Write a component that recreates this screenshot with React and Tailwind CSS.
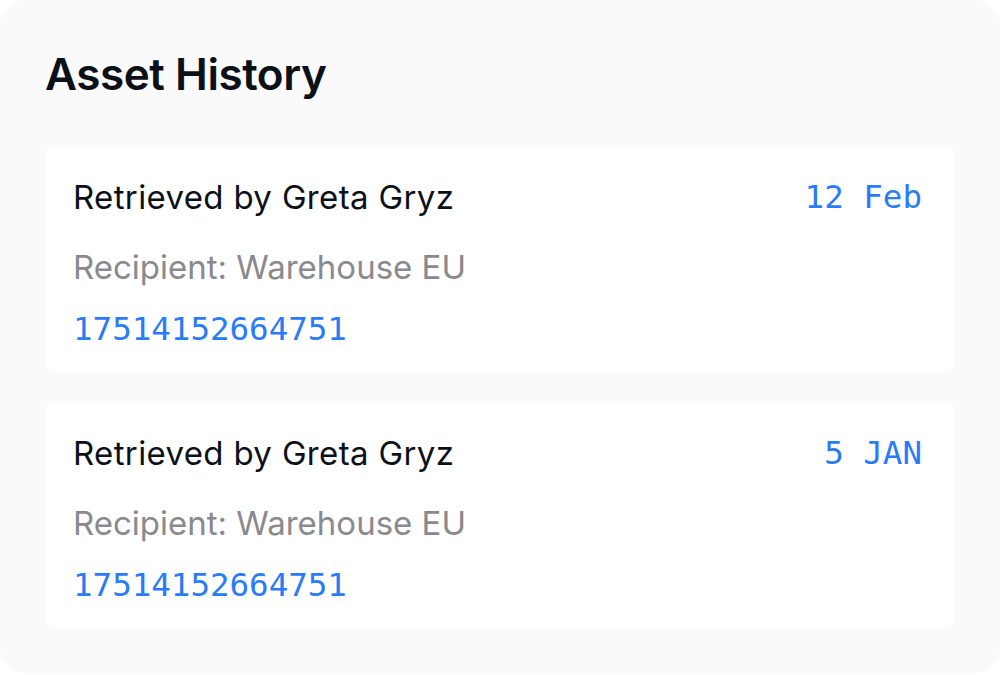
import React from 'react';

const history = [
  { id: 1, title: 'Retrieved by Greta Gryz', recipient: 'Warehouse EU', code: '17514152664751', date: '12 Feb' },
  { id: 2, title: 'Retrieved by Greta Gryz', recipient: 'Warehouse EU', code: '17514152664751', date: '5 JAN' },
];

const App = () => {
  return (
    <div className="w-[1000px] h-[675px] bg-white" style={{ fontFamily: 'Inter, "Noto Sans", sans-serif' }}>
      <div className="h-[673px] bg-[#fafafa] rounded-[24px] px-[45px] pt-[48px]">
        <h1 className="text-[44px] leading-[52px] font-semibold text-[#0b1117] tracking-[-0.01em]">Asset History</h1>

        <div className="mt-[45px] flex flex-col gap-[29px]">
          {history.map(item => (
            <div key={item.id} className="bg-white rounded-[12px] h-[227px] pl-[28px] pr-[33px] pt-[30px]">
              <div className="flex justify-between items-start">
                <p className="text-[33px] leading-[44px] tracking-[0.35px] text-[#0b1117]">{item.title}</p>
                <span className="text-[32.5px] leading-[44px] text-[#2a7cf6] font-['DejaVu_Sans_Mono',monospace]">{item.date}</span>
              </div>
              <p className="mt-[26px] text-[33px] leading-[44px] text-[#8a8a8e]">Recipient: {item.recipient}</p>
              <p className="mt-[18px] text-[32.5px] leading-[44px] text-[#2a7cf6] font-['DejaVu_Sans_Mono',monospace]">{item.code}</p>
            </div>
          ))}
        </div>
      </div>
    </div>
  );
};

export default App;
